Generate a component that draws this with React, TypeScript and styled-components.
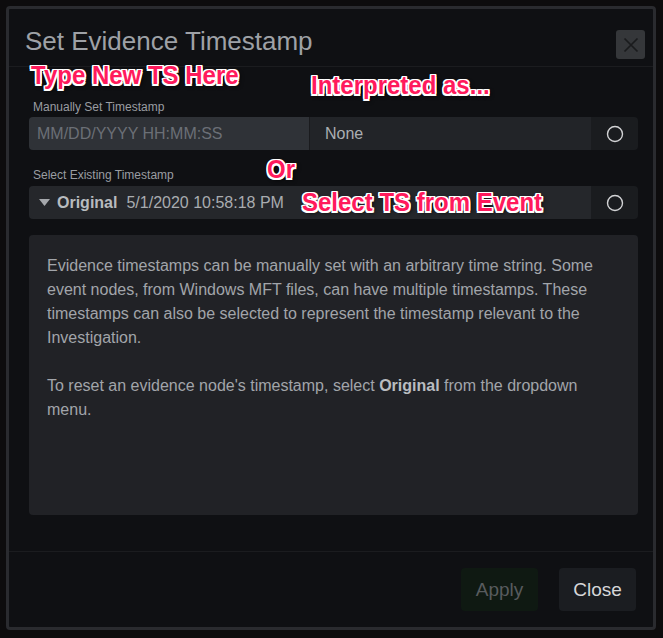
import React from 'react';
import styled, { createGlobalStyle } from 'styled-components';

const Global = createGlobalStyle`
  html, body { margin: 0; padding: 0; background: #0d0c0d; }
  body { font-family: 'Liberation Sans', Arial, Helvetica, sans-serif; }
  * { box-sizing: border-box; }
`;

const Page = styled.div`
  position: relative;
  width: 663px;
  height: 638px;
  padding: 6px 7px 8px 6px;
  background: #0d0c0d;
  overflow: hidden;
`;

const Modal = styled.div`
  width: 650px;
  height: 624px;
  border: 3px solid #2a2b2f;
  border-radius: 4px;
  background: #0f1013;
  display: flex;
  flex-direction: column;
`;

const Header = styled.div`
  height: 58px;
  flex: none;
  display: flex;
  align-items: flex-start;
  justify-content: space-between;
  padding: 21px 8px 0 16px;
  border-bottom: 1px solid #1b1c1f;
`;

const Title = styled.h4`
  margin: 0;
  font-size: 26px;
  line-height: 23px;
  font-weight: 400;
  color: #9ea1a6;
`;

const CloseX = styled.button`
  width: 29px;
  height: 29px;
  border: none;
  border-radius: 3px;
  background: #35373a;
  display: flex;
  align-items: center;
  justify-content: center;
  padding: 0;
`;

const Body = styled.div`
  flex: 1;
  display: flex;
  flex-direction: column;
  padding: 0 15px 0 20px;
`;

const Label = styled.div<{ $top: number }>`
  margin-top: ${(p) => p.$top}px;
  margin-bottom: ${(p) => (p.$top > 20 ? 3 : 4)}px;
  padding-left: 4px;
  font-size: 12px;
  line-height: 14px;
  color: #9a9da2;
`;

const Row = styled.div`
  display: flex;
  height: 33px;
  border-radius: 4px;
  overflow: hidden;
`;

const TsInput = styled.input`
  width: 280px;
  height: 100%;
  border: none;
  outline: none;
  background: #2f3237;
  padding: 0 0 0 8px;
  font-family: inherit;
  font-size: 16px;
  color: #c8cacd;
  &::placeholder { color: #6b6f76; }
`;

const Interpreted = styled.div`
  flex: 1;
  display: flex;
  align-items: center;
  background: #222428;
  border-left: 1px solid #1a1b1e;
  padding-left: 15px;
  font-size: 16px;
  color: #abaeb2;
`;

const Select = styled.div`
  flex: 1;
  display: flex;
  align-items: center;
  background: #25272b;
  padding-left: 10px;
  font-size: 16px;
  color: #a9acb0;
`;

const Caret = styled.svg`
  margin-right: 7px;
`;

const Strong = styled.b`
  color: #b8bbbf;
  margin-right: 9px;
`;

const RadioCell = styled.div`
  width: 47px;
  flex: none;
  display: flex;
  align-items: center;
  justify-content: center;
  background: #1a1c1f;
`;

const Info = styled.div`
  margin-top: 16px;
  height: 280px;
  background: #212226;
  border-radius: 4px;
  padding: 19px 18px;
  font-size: 16px;
  line-height: 24px;
  color: #a2a5aa;
`;

const Para = styled.p`
  margin: 0 0 24px;
`;

const Em = styled.b`
  color: #b9bcc0;
`;

const Footer = styled.div`
  height: 76px;
  flex: none;
  border-top: 1px solid #1b1c1f;
  display: flex;
  justify-content: flex-end;
  align-items: flex-start;
  gap: 21px;
  padding: 16px 17px 0 0;
`;

const Btn = styled.button<{ $primary?: boolean }>`
  width: 77px;
  height: 43px;
  border: none;
  border-radius: 4px;
  font-family: inherit;
  font-size: 19px;
  background: ${(p) => (p.$primary ? '#0f1912' : '#1b1d21')};
  color: ${(p) => (p.$primary ? '#585b5e' : '#d6d7d9')};
`;

const Note = styled.div<{ $x: number; $y: number }>`
  position: absolute;
  left: ${(p) => p.$x}px;
  top: ${(p) => p.$y}px;
  font-family: 'Liberation Sans', Arial, sans-serif;
  font-weight: 700;
  font-size: 24px;
  line-height: 24px;
  white-space: nowrap;
  color: #ff1a5c;
  transform: scaleY(1.06);
  transform-origin: left top;
  text-shadow:
    -1.5px -1.5px 0 #fff, 1.5px -1.5px 0 #fff, -1.5px 1.5px 0 #fff, 1.5px 1.5px 0 #fff,
    0 1.5px 0 #fff, 0 -1.5px 0 #fff, 1.5px 0 0 #fff, -1.5px 0 0 #fff,
    2px 2px 4px rgba(0, 0, 0, 0.9);
`;

const Radio = () => (
  <svg width="18" height="18" viewBox="0 0 18 18">
    <circle cx="9" cy="9" r="7.5" fill="none" stroke="#d2d3d5" strokeWidth="1.4" />
  </svg>
);

export default function App() {
  return (
    <>
      <Global />
      <Page>
        <Modal>
          <Header>
            <Title>Set Evidence Timestamp</Title>
            <CloseX aria-label="Close">
              <svg width="16" height="16" viewBox="0 0 16 16">
                <path d="M1.5 1.5 L14.5 14.5 M14.5 1.5 L1.5 14.5" stroke="#1a1b1d" strokeWidth="1.7" fill="none" />
              </svg>
            </CloseX>
          </Header>
          <Body>
            <Label $top={33}>Manually Set Timestamp</Label>
            <Row>
              <TsInput placeholder="MM/DD/YYYY HH:MM:SS" />
              <Interpreted>None</Interpreted>
              <RadioCell><Radio /></RadioCell>
            </Row>
            <Label $top={18}>Select Existing Timestamp</Label>
            <Row>
              <Select>
                <Caret width="11" height="7" viewBox="0 0 11 7">
                  <path d="M0 0 H11 L5.5 7 Z" fill="#a5a8ac" />
                </Caret>
                <Strong>Original</Strong>
                5/1/2020 10:58:18 PM
              </Select>
              <RadioCell><Radio /></RadioCell>
            </Row>
            <Info>
              <Para>
                Evidence timestamps can be manually set with an arbitrary time string. Some event
                nodes, from Windows MFT files, can have multiple timestamps. These timestamps can
                also be selected to represent the timestamp relevant to the Investigation.
              </Para>
              <Para>
                To reset an evidence node's timestamp, select <Em>Original</Em> from the dropdown menu.
              </Para>
            </Info>
          </Body>
          <Footer>
            <Btn $primary>Apply</Btn>
            <Btn>Close</Btn>
          </Footer>
        </Modal>
        <Note $x={31} $y={63}>Type New TS Here</Note>
        <Note $x={311} $y={73}>Interpreted as...</Note>
        <Note $x={267} $y={157}>Or</Note>
        <Note $x={302} $y={190}>Select TS from Event</Note>
      </Page>
    </>
  );
}
